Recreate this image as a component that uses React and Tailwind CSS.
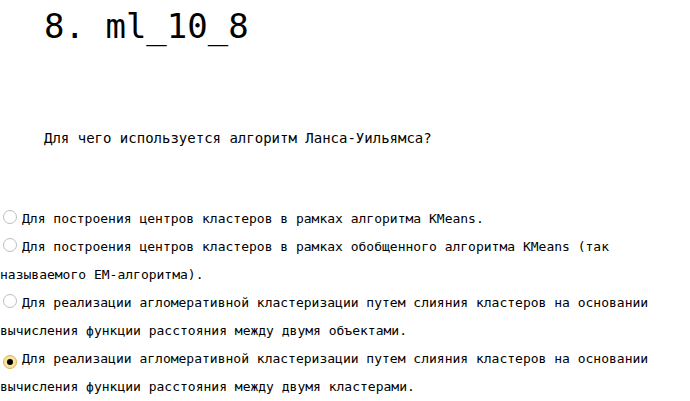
import React from "react";

const answers = [
    {text: "Для построения центров кластеров в рамках алгоритма KMeans.", checked: false},
    {text: "Для построения центров кластеров в рамках обобщенного алгоритма KMeans (так называемого EM-алгоритма).", checked: false},
    {text: "Для реализации агломеративной кластеризации путем слияния кластеров на основании вычисления функции расстояния между двумя объектами.", checked: false},
    {text: "Для реализации агломеративной кластеризации путем слияния кластеров на основании вычисления функции расстояния между двумя кластерами.", checked: true},
];

function Radio({checked}) {
    if (checked) {
        return (
            <span className="inline-flex items-center justify-center w-[14px] h-[14px] ml-[3px] mr-[5px] rounded-full border border-[#d9b44a] bg-[#f7e2a3] align-[-2px]">
                <span className="w-[6px] h-[6px] rounded-full bg-black"/>
            </span>
        );
    }
    return (
        <span className="inline-block w-[14px] h-[14px] ml-[3px] mr-[5px] rounded-full border border-[#bdbdbd] bg-white align-[-1px]"/>
    );
}

export default function App() {
    return (
        <div className="w-[690px] min-h-[401px] bg-white text-black font-['DejaVu_Sans_Mono',monospace]">
            <h1 className="pt-[6px] pl-[44px] text-[34px] leading-[40px] font-normal">8. ml_10_8</h1>
            {/* вопрос */}
            <p className="mt-[82px] pl-[44px] text-[14px] leading-[20px]">
                Для чего используется алгоритм Ланса-Уильямса?
            </p>
            <div className="mt-[57px] text-[13px] leading-[28px]">
                {answers.map((a, i) => (
                    <div key={i}>
                        <Radio checked={a.checked}/>
                        {a.text}
                    </div>
                ))}
            </div>
        </div>
    );
}
